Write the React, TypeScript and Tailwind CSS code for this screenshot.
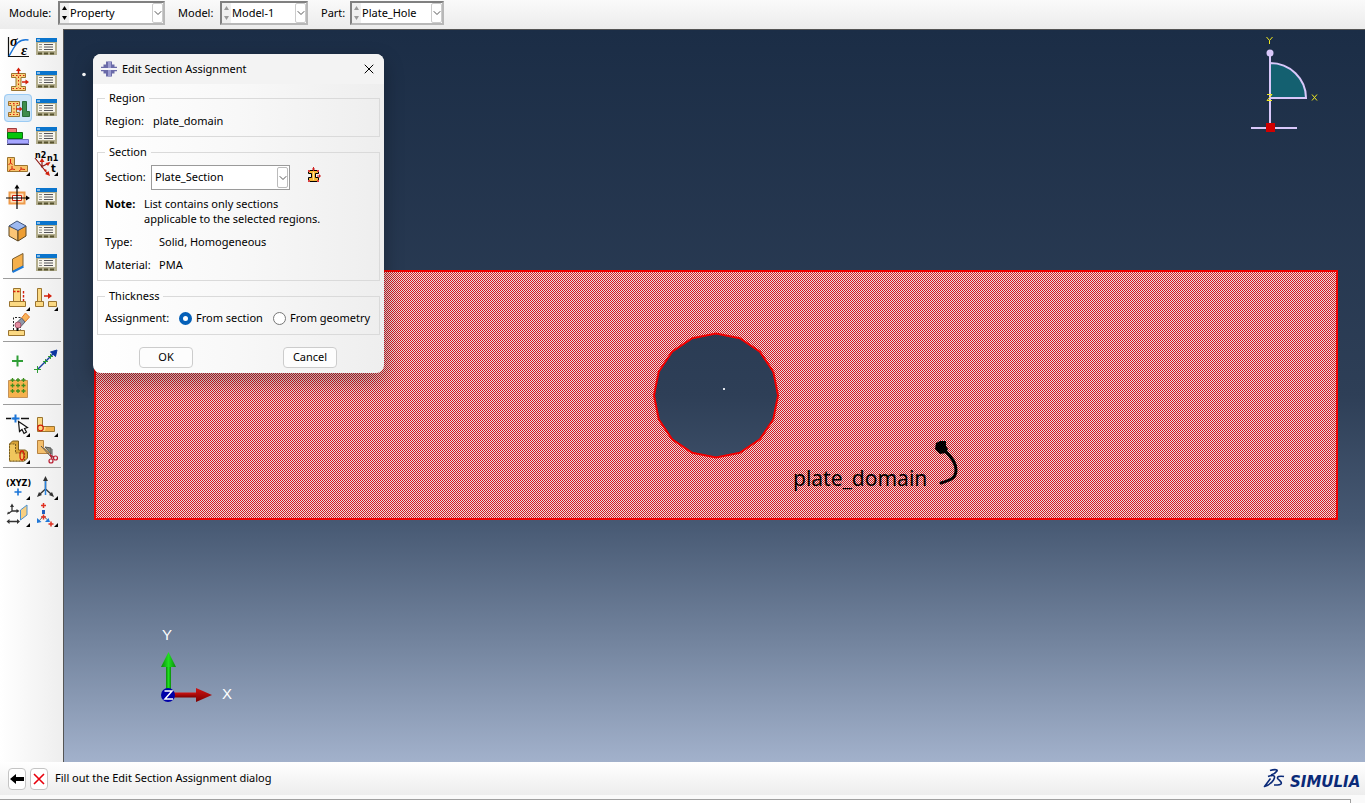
import type { ReactNode } from 'react';
import clsx from 'clsx';
import { ChevronDown, X } from 'lucide-react';

/* ---------- toolbox icons, all on a 28x28 grid ---------- */

const RED = '#d4200c';
const TAN = '#fbd983';
const BROWN = '#9a7430';

function Icon({ children }: { children: ReactNode }) {
  return (
    <svg viewBox="0 0 28 28" className="block w-7 h-7 overflow-visible" fill="none" aria-hidden="true">
      {children}
    </svg>
  );
}

const More = () => <path d="M26 22v4h-4z" fill="#000" />;

function Plus({ x, y, r, color, w = 1 }: { x: number; y: number; r: number; color: string; w?: number }) {
  return <path d={`M${x - r} ${y}H${x + r}M${x} ${y - r}V${y + r}`} stroke={color} strokeWidth={w} />;
}

function Beam({ x, y, w, h }: { x: number; y: number; w: number; h: number }) {
  const m = x + w / 2;
  return (
    <>
      <path
        d={`M${x} ${y}h${w}v4h${-(w / 2 - 2.5)}v${h - 8}h${w / 2 - 2.5}v4h${-w}v-4h${w / 2 - 2.5}v${-(h - 8)}h${-(w / 2 - 2.5)}z`}
        fill="#f9d27c"
        stroke={BROWN}
      />
      <path d={`M${x + 1} ${y + 2}h${w - 1}M${m} ${y + 3}v${h - 6}M${x + 1} ${y + h - 2}h${w - 1}`} stroke={RED} strokeDasharray="1.500 2" />
    </>
  );
}

const ManagerIcon = () => (
  <Icon>
    <rect x="4" y="5" width="21" height="17" fill="#b3ae8e" />
    <rect x="4" y="5" width="21" height="4" fill="#0a74cc" />
    <path d="M5 7h3" stroke="#fff" />
    <rect x="6" y="10" width="17" height="8" fill="#f7f5ec" />
    <path d="M7 11.500h3M7 14h3M7 16.500h3" stroke="#8c8c84" />
    <path d="M12 11.500h9M12 14h9M12 16.500h9" stroke="#55555a" />
    <path d="M6 20.500h4M12 20.500h4M18 20.500h4" stroke="#57532f" strokeWidth="2" />
  </Icon>
);

const MaterialIcon = () => (
  <Icon>
    <path d="M4.500 4V23.500H25" stroke="#111" strokeWidth="1.200" />
    <path d="M5 23C10 15 13 5 24.500 7" stroke="#1974d8" strokeWidth="1.400" />
    <text x="6" y="13" fontFamily="Liberation Serif, serif" fontStyle="italic" fontWeight="bold" fontSize="14" fill="#000">σ</text>
    <text x="17" y="22" fontFamily="Liberation Serif, serif" fontStyle="italic" fontWeight="bold" fontSize="15" fill="#000">ε</text>
  </Icon>
);

const SectionIcon = () => (
  <Icon>
    <Beam x={7.5} y={7.5} w={14} h={17} />
    <path d="M14.500 8V4M18 16h4" stroke={RED} strokeWidth="1.500" />
    <path d="M14.500 1.500l2.500 3.500h-5zM25 16l-3.500 2.500v-5z" fill={RED} />
  </Icon>
);

const AssignSectionIcon = () => (
  <Icon>
    <Beam x={4.5} y={7.5} w={11} h={15} />
    <path d="M12 15h4" stroke={RED} strokeWidth="1.500" />
    <path d="M18.500 15l-3 2.500v-5z" fill={RED} />
    <path d="M18.500 7.500h4v10h3v5h-7z" fill="#3f8c4c" stroke="#2b6b38" />
  </Icon>
);

const LayupIcon = () => (
  <Icon>
    <path d="M3.500 6.500h9v4h-9z" fill="#f07e78" stroke="#a03c3c" />
    <path d="M3.500 10.500h15v6h-15z" fill="#06c60c" stroke="#0a6e10" />
    <path d="M3.500 17.500h21v4h-21z" fill="#a6a6ff" stroke="#7474c4" />
    <path d="M3 22.500h22" stroke="#333350" />
  </Icon>
);

const OrientationIcon = () => (
  <Icon>
    <path d="M3.500 7.500h7v8h13v6h-20z" fill="#f8c269" stroke={BROWN} />
    <path d="M6.500 9v4l-2 2M6.500 13l2 1.500M8 16v3l-3 1.500M8 19l3 .5M17 17v2.500l-2 1.500M17 19l4 .5" stroke={RED} />
    <More />
  </Icon>
);

const NormalsIcon = () => (
  <Icon>
    <text x="3" y="8" fontFamily="DejaVu Sans, sans-serif" fontWeight="bold" fontSize="8" fill="#000">n2</text>
    <text x="15" y="11" fontFamily="DejaVu Sans, sans-serif" fontWeight="bold" fontSize="8" fill="#000">n1</text>
    <text x="19" y="22" fontFamily="DejaVu Sans, sans-serif" fontWeight="bold" fontSize="10" fill="#000">t</text>
    <path d="M3 8L15 23M10 16V11M9 17L17 13" stroke="#8d1a14" strokeWidth="1.200" />
    <path d="M10 8l2.500 4h-5zM18.500 12l-2.500 4-2.500-3zM18 26l-5-2 3.500-3zM12 19l3 1-2 2z" fill={RED} />
    <More />
  </Icon>
);

const ReferenceIcon = () => (
  <Icon>
    <path d="M5.500 9.500h15v11h-15z" fill="#fbe3c0" stroke="#ee9a4a" strokeWidth="2" />
    <path d="M8.500 12.500h9v5h-9z" fill="#fff" stroke={RED} />
    <path d="M13 4v22M2 15h21" stroke="#000" strokeWidth="1.200" />
    <path d="M13 1.500l2.500 4h-5zM26 15l-4 2.500v-5z" fill="#000" />
  </Icon>
);

const SolidIcon = () => (
  <Icon>
    <path d="M5 10l9 4v11l-9-5z" fill="#fcc575" stroke="#5c4620" />
    <path d="M14 14l8-4v10l-8 5z" fill="#ed9e34" stroke="#5c4620" />
    <path d="M5 10l8-5 9 5-8 4.500z" fill="#9db9f1" stroke="#3f5378" />
  </Icon>
);

const ShellIcon = () => (
  <Icon>
    <path d="M8.500 10L19 4.500V17L8.500 22.500z" fill="#f5b04c" stroke="#7a5e30" />
    <path d="M8.500 23L19.500 17.500" stroke="#1d7ad8" strokeWidth="2" />
  </Icon>
);

const StringerIcon = () => (
  <Icon>
    <path d="M9.500 3.500h7v13h-7zM5.500 16.500h16v5h-16z" fill={TAN} stroke={BROWN} />
    <path d="M9 6.500h8M19.500 6v10" stroke={RED} strokeWidth="1.400" strokeDasharray="2.500 1.500" />
    <More />
  </Icon>
);

const MoveStringerIcon = () => (
  <Icon>
    <path d="M5.500 3.500h4v13h-4zM3.500 16.500h8v5h-8zM16.500 16.500h8v5h-8z" fill={TAN} stroke={BROWN} />
    <path d="M12 11h5" stroke={RED} strokeWidth="1.500" />
    <path d="M20 11l-4 3V8z" fill={RED} />
    <More />
  </Icon>
);

const EraserIcon = () => (
  <Icon>
    <path d="M4.500 18.500h16v5h-16z" fill={TAN} stroke={BROWN} />
    <path d="M9.500 18V5.500h7V18" stroke="#222" strokeDasharray="2 1.500" />
    <path d="M17.500 6l4-5 4 4-4.500 5z" fill="#f9b35a" stroke="#e07828" />
    <path d="M12 11.500l5.500-5.500 3.500 4-5 5.500z" fill="#8f98a8" stroke="#5f6470" />
    <circle cx="14" cy="13" r="3" fill="#e38ca0" stroke="#a5566c" />
    <path d="M13.500 16v3" stroke="#111" strokeWidth="2" />
  </Icon>
);

const PointIcon = () => (
  <Icon>
    <Plus x={13.5} y={13} r={5.5} color="#2f9e36" w={2} />
  </Icon>
);

const WireIcon = () => (
  <Icon>
    <path d="M5.500 21.500L22 5" stroke="#173f9c" strokeWidth="1.400" />
    <path d="M25 2l-1.500 6.500-5-4.500z" fill="#0a36a0" stroke="#0a36a0" />
    <Plus x={5.5} y={21.5} r={3.5} color="#2f9e36" />
    <Plus x={13.5} y={13.5} r={2.5} color="#2f9e36" />
    <Plus x={18.5} y={8.5} r={2.5} color="#2f9e36" />
  </Icon>
);

const DatumGridIcon = () => (
  <Icon>
    <path d="M4.500 5.500h19v17h-19z" fill="#f6b24e" stroke="#c4935a" />
    {[5, 10.5, 16].map(y => [8.5, 14, 19.5].map(x => <Plus key={`${x}-${y}`} x={x} y={y} r={2} color="#3e8e1e" w={1.3} />))}
  </Icon>
);

const EdgePointIcon = () => (
  <Icon>
    <path d="M2 7.500h5M9 7.500h2M17 7.500h8" stroke="#111" strokeWidth="1.400" />
    <Plus x={11.5} y={7.5} r={4} color="#1974d8" w={2} />
    <path d="M14.500 10.500l1 10 2.500-2 2 4 2.500-1.500-2-3.500 3-1z" fill="#fff" stroke="#111" strokeWidth="1.200" />
    <More />
  </Icon>
);

const CornerIcon = () => (
  <Icon>
    <path d="M5.500 6.500h5v9h12v5h-17z" fill={TAN} stroke={BROWN} />
    <path d="M14 16h8v4h-9z" fill="#f3b04c" />
    <circle cx="8.500" cy="17" r="2.800" stroke={RED} strokeWidth="1.200" />
    <More />
  </Icon>
);

const PartitionIcon = () => (
  <Icon>
    <path d="M5.500 6l3-3h6v9h7l2 2v6l-3 3h-15z" fill="#d9a436" stroke="#7b5e1e" />
    <path d="M5.500 6h6v9h9v8h-15z" fill="#f0c65c" stroke="#7b5e1e" strokeDasharray="2 1" />
    <ellipse cx="18" cy="17.500" rx="2" ry="4.500" stroke={RED} strokeWidth="1.300" />
    <More />
  </Icon>
);

const CutIcon = () => (
  <Icon>
    <path d="M5.500 2.500h6v7l6 6h-12z" fill="#f4bf6c" stroke="#b78240" />
    <path d="M13 9l6 1v6z" fill="#8c8c7a" stroke="#555" />
    <path d="M9 8L20 20M20 11v9" stroke="#555" />
    <circle cx="19" cy="23" r="2" stroke="#b81c30" strokeWidth="1.200" />
    <circle cx="23.500" cy="20" r="2" stroke="#b81c30" strokeWidth="1.200" />
    <path d="M18 16l2 5M18 17l4 2" stroke="#b81c30" strokeWidth="1.200" />
  </Icon>
);

const XyzIcon = () => (
  <Icon>
    <text x="2" y="12" fontFamily="DejaVu Sans, sans-serif" fontWeight="bold" fontSize="8" fill="#000">(XYZ)</text>
    <Plus x={14} y={18} r={3.5} color="#1974d8" w={1.6} />
    <More />
  </Icon>
);

const AxesIcon = () => (
  <Icon>
    <path d="M13.500 16V5M13.500 15L8 20M13.500 15L19 20" stroke="#333" strokeWidth="1.400" />
    <path d="M13.500 2l2.500 5h-5zM5 23l2-5 3 3zM22 23l-5-2 3-3z" fill="#333" />
    <path d="M13.500 7v14" stroke="#2a84e0" strokeWidth="1.500" />
    <More />
  </Icon>
);

const PlaneIcon = () => (
  <Icon>
    <path d="M8 10V5M8 10h5M8 10l-3 2M5 20.500h9" stroke="#333" strokeWidth="1.300" />
    <path d="M8 2.500l2 3.500H6zM15.500 10l-3 2V8zM3 13.500l1-3 2 2zM2.500 20.500l3-2.500v5zM16 20.500l-3-2.500v5z" fill="#333" />
    <path d="M16.500 9L23 4v10l-6.500 5z" fill="#f8cf80" stroke="#4a90d0" />
    <More />
  </Icon>
);

const CsysIcon = () => (
  <Icon>
    <Plus x={11.5} y={4.5} r={2.5} color="#e03020" w={1.5} />
    <path d="M10 9h3v4h-3z" fill="#2060c0" />
    <path d="M11.500 15L7 20M11.500 15l5 5" stroke="#333" strokeDasharray="2 1" />
    <Plus x={11.5} y={16} r={2.5} color="#e03020" w={1.5} />
    <path d="M5 22v-5l4.500 4zM18 21h-5l3.500-4z" fill="#2078d8" />
    <Plus x={19} y={23} r={2.5} color="#e03020" w={1.5} />
    <More />
  </Icon>
);

/* ---------- toolbox ---------- */

type Tool = { label: string; icon: ReactNode; active?: boolean };

const manager = (name: string): Tool => ({ label: `${name} Manager`, icon: <ManagerIcon /> });

const primaryRows: { gap?: boolean; tools: Tool[] }[] = [
  { tools: [{ label: 'Create Material', icon: <MaterialIcon /> }, manager('Material')] },
  { gap: true, tools: [{ label: 'Create Section', icon: <SectionIcon /> }, manager('Section')] },
  { tools: [{ label: 'Assign Section', icon: <AssignSectionIcon />, active: true }, manager('Section Assignment')] },
  { tools: [{ label: 'Create Composite Layup', icon: <LayupIcon /> }, manager('Composite Layup')] },
  { tools: [{ label: 'Assign Material Orientation', icon: <OrientationIcon /> }, { label: 'Assign Beam Orientation', icon: <NormalsIcon /> }] },
  { gap: true, tools: [{ label: 'Create Reference', icon: <ReferenceIcon /> }, manager('Reference')] },
  { gap: true, tools: [{ label: 'Create Solid', icon: <SolidIcon /> }, manager('Solid')] },
  { gap: true, tools: [{ label: 'Create Skin', icon: <ShellIcon /> }, manager('Skin')] },
];

const toolGroups: Tool[][] = [
  [
    { label: 'Create Stringer', icon: <StringerIcon /> },
    { label: 'Move Stringer', icon: <MoveStringerIcon /> },
    { label: 'Remove Stringer', icon: <EraserIcon /> },
  ],
  [
    { label: 'Create Point', icon: <PointIcon /> },
    { label: 'Create Wire', icon: <WireIcon /> },
    { label: 'Create Grid', icon: <DatumGridIcon /> },
  ],
  [
    { label: 'Partition Edge', icon: <EdgePointIcon /> },
    { label: 'Partition Face', icon: <CornerIcon /> },
    { label: 'Partition Cell', icon: <PartitionIcon /> },
    { label: 'Repair', icon: <CutIcon /> },
  ],
  [
    { label: 'Datum Point', icon: <XyzIcon /> },
    { label: 'Datum Axis', icon: <AxesIcon /> },
    { label: 'Datum Plane', icon: <PlaneIcon /> },
    { label: 'Datum CSYS', icon: <CsysIcon /> },
  ],
];

function ToolButton({ tool, className }: { tool: Tool; className: string }) {
  return (
    <button
      type="button"
      aria-label={tool.label}
      className={clsx('w-7', className, tool.active && 'rounded-sm bg-[#cfe5f8] outline -outline-offset-1 outline-[#9ccbf3]')}
    >
      {tool.icon}
    </button>
  );
}

function Toolbox() {
  return (
    <aside className="w-[63px] flex-shrink-0 bg-gradient-to-r from-white to-[#eeeeee]">
      <div className="pl-1 pt-1 pb-px">
        {primaryRows.map((row, i) => (
          <div key={i} className={clsx('flex', row.gap && 'mt-[5px]')}>
            {row.tools.map(tool => (
              <ToolButton key={tool.label} tool={tool} className="h-7" />
            ))}
          </div>
        ))}
      </div>
      {toolGroups.map((group, i) => (
        <div key={i} className="ml-[3px] mr-[2px] flex flex-wrap border-t border-[#9c9c9c] pt-[6px] pb-[2px] pl-px">
          {group.map(tool => (
            <ToolButton key={tool.label} tool={tool} className="h-[27px]" />
          ))}
        </div>
      ))}
    </aside>
  );
}

/* ---------- context bar ---------- */

type ContextSelectProps = { id: string; label: string; value: string; labelWidth: string; width: string; enabled?: boolean };

function ContextSelect({ id, label, value, labelWidth, width, enabled }: ContextSelectProps) {
  const arrow = enabled ? '#000' : '#9a9a9a';
  return (
    <div className="flex items-center">
      <label htmlFor={id} className={labelWidth}>{label}</label>
      <div className={clsx('relative flex h-6 items-center border-2 border-[#808080] border-b-[#b8b8b8] border-r-[#b8b8b8] bg-white', width)}>
        <div className="flex h-full w-[9px] flex-col bg-[#f0f0f0]">
          <button type="button" aria-label={`Previous ${id}`} disabled={!enabled} className="flex flex-1 items-center justify-center">
            <svg width="5" height="4"><path d="M2.500 0L5 4H0z" fill={arrow} /></svg>
          </button>
          <button type="button" aria-label={`Next ${id}`} disabled={!enabled} className="flex flex-1 items-center justify-center">
            <svg width="5" height="4"><path d="M2.500 4L5 0H0z" fill={arrow} /></svg>
          </button>
        </div>
        <select id={id} defaultValue={value} className="h-full min-w-0 flex-1 appearance-none bg-transparent pl-px outline-none">
          <option>{value}</option>
        </select>
        <span className="pointer-events-none absolute inset-y-0 right-0 flex w-[11px] items-center justify-center rounded-xs border border-[#cccccc] bg-white">
          <ChevronDown className="h-3 w-3 flex-shrink-0 text-[#555555]" />
        </span>
      </div>
    </div>
  );
}

/* ---------- viewport ---------- */

const HOLE = { x: 653, y: 366.5, r: 62 };
const holePoints = Array.from({ length: 16 }, (_, i) => {
  const a = (i * Math.PI) / 8;
  return `${HOLE.x + HOLE.r * Math.cos(a)} ${HOLE.y + HOLE.r * Math.sin(a)}`;
});
const platePath = `M32 242H1274V490H32ZM${holePoints.join('L')}Z`;

function Scene() {
  return (
    <svg className="absolute inset-0 h-full w-full" aria-label="Plate_Hole model">
      <defs>
        <pattern id="stipple" width="2" height="2" patternUnits="userSpaceOnUse">
          <g shapeRendering="crispEdges">
            <rect width="2" height="2" fill="#e4e0e0" />
            <rect width="1" height="1" fill="#dc141c" />
            <rect x="1" y="1" width="1" height="1" fill="#dc141c" />
          </g>
        </pattern>
        <linearGradient id="shaftY"><stop stopColor="#0a8a0a" /><stop offset=".5" stopColor="#1fe01f" /><stop offset="1" stopColor="#0a8a0a" /></linearGradient>
        <linearGradient id="shaftX" x2="0" y2="1"><stop stopColor="#d01414" /><stop offset="1" stopColor="#7c0000" /></linearGradient>
      </defs>
      <path d={platePath} fill="url(#stipple)" fillRule="evenodd" stroke="#f00000" strokeWidth="2" />
      <circle cx="21" cy="45.500" r="1.800" fill="#fff" />
      <rect x="660" y="359" width="2" height="2" fill="#dfe4ea" />

      <text x="730" y="457" fontFamily="Noto Sans, sans-serif" fontSize="21" fill="#000">plate_domain</text>
      <path d="M881 421C889 428 893 434 893 441C893 449 888 451 878 454" stroke="#000" strokeWidth="3" fill="none" strokeLinecap="round" />
      <path d="M873 414l4-2h6v5l2 3-2 4-6 1-5-5z" fill="#000" />

      <path d="M103 637h5v26h-5z" fill="url(#shaftY)" />
      <path d="M105.500 623l7.500 15H98z" fill="url(#shaftY)" />
      <path d="M110 663.500h24v5h-24z" fill="url(#shaftX)" />
      <path d="M133 659l16 7-16 7z" fill="url(#shaftX)" />
      <circle cx="105" cy="666" r="7" fill="#0000a8" />
      <path d="M101.500 662h7.500l-7 8h8" stroke="#fff" strokeWidth="1.500" fill="none" />
      <text x="99" y="611" fontFamily="Liberation Sans, sans-serif" fontSize="15" fill="#fff">Y</text>
      <text x="159" y="670" fontFamily="Liberation Sans, sans-serif" fontSize="15" fill="#fff">X</text>
    </svg>
  );
}

function ViewCompass() {
  return (
    <svg className="absolute top-0 right-[45px] h-[105px] w-20" viewBox="0 0 80 105" aria-label="View compass">
      <path d="M30 34A36 35 0 0 1 66 69H30z" fill="#146070" stroke="#d9c8fa" strokeWidth="2" />
      <path d="M30 24V99M11 99H57" stroke="#d9c8fa" strokeWidth="2" />
      <circle cx="30" cy="24" r="3.500" fill="#d9c8fa" />
      <rect x="26" y="94" width="9" height="9" fill="#d00000" />
      <g stroke="#f0e820" fill="none">
        <path d="M26.500 8l3 3.500 3-3.500M29.500 11.500V15" />
        <path d="M27 65.500h5l-5 6h5" />
        <path d="M72 65.500l5 6M77 65.500l-5 6" />
      </g>
    </svg>
  );
}

/* ---------- dialog ---------- */

function Group({ title, className, children }: { title: string; className: string; children: ReactNode }) {
  return (
    <fieldset className={clsx('border border-[#dadada] px-[7px]', className)}>
      <legend className="px-1 leading-4">{title}</legend>
      {children}
    </fieldset>
  );
}

const radioClass = 'h-[13px] w-[13px] appearance-none rounded-full border border-[#777777] bg-white checked:border-4 checked:border-[#0560b8]';

function SectionDialog() {
  return (
    <form
      role="dialog"
      aria-labelledby="dialog-title"
      onSubmit={e => e.preventDefault()}
      className="absolute top-[25px] left-[30px] w-[291px] overflow-hidden rounded-lg bg-gradient-to-r from-white via-[#f8f8f8] to-[#eeeeee] pb-[5px] shadow-[0_8px_20px_rgba(0,0,0,0.3)]"
    >
      <header className="flex h-[30px] items-center bg-[#f3f3f3] pr-[7px] pl-2">
        <svg viewBox="0 0 16 16" className="h-4 w-4" aria-hidden="true">
          <path d="M5 0.500h6v3h2.500v2.200H16v1.500H0V5.700h2.500V3.500H5z" fill="#6a6aa8" />
          <path d="M5 15.500h6v-3h2.500v-2.200H16V8.800H0v1.500h2.500v2.200H5z" fill="#6a6aa8" />
          <path d="M7 0.500h3v6.700H7zM7 8.800h3v6.700H7z" fill="#9c9cd0" />
          <path d="M0 8h16" stroke="#fff" strokeWidth="1.600" />
        </svg>
        <h1 id="dialog-title" className="flex-1 pl-[5px]">Edit Section Assignment</h1>
        <button type="button" aria-label="Close">
          <X className="h-4 w-4" strokeWidth={1.5} />
        </button>
      </header>

      <div className="px-1 pt-[6px]">
        <Group title="Region" className="h-[47px]">
          <p className="flex pt-[7px] leading-4">
            <span className="w-12">Region:</span>
            <span>plate_domain</span>
          </p>
        </Group>

        <Group title="Section" className="mt-[7px] h-[137px]">
          <div className="flex items-center pt-[5px]">
            <label htmlFor="section" className="w-[46px]">Section:</label>
            <div className="relative h-[25px] w-[139px]">
              <select id="section" defaultValue="Plate_Section" className="h-full w-full appearance-none border border-[#9a9a9a] bg-white pl-[3px] outline-none">
                <option>Plate_Section</option>
              </select>
              <span className="pointer-events-none absolute inset-y-[2px] right-[2px] flex w-[11px] items-center justify-center rounded-xs border border-[#bbbbbb]">
                <ChevronDown className="h-3 w-3 flex-shrink-0 text-[#555555]" />
              </span>
            </div>
            <button type="button" aria-label="Create section" className="ml-4 pb-[6px]">
              <svg viewBox="0 0 16 16" className="h-4 w-4">
                <path d="M2.500 3.500h10v3h-3v4h3v4h-10v-4h3v-4h-3z" fill="#f5b838" stroke="#000" />
                <path d="M7.500 5v8" stroke="#fbe29a" />
                <path d="M7.500 0v4M6 2h3M11 9h4M13.500 7.500v3" stroke="#d02020" />
                <path d="M2 3h2v2H2zM11 3h2v2h-2zM2 13h2v2H2zM11 13h2v2h-2z" fill="#d84040" />
              </svg>
            </button>
          </div>
          <div className="flex pt-[6px] leading-[15px]">
            <strong className="w-[39px]">Note:</strong>
            <p>List contains only sections<br />applicable to the selected regions.</p>
          </div>
          <dl className="grid grid-cols-[54px_1fr] gap-y-2 pt-2 leading-[15px]">
            <dt>Type:</dt>
            <dd>Solid, Homogeneous</dd>
            <dt>Material:</dt>
            <dd>PMA</dd>
          </dl>
        </Group>

        <Group title="Thickness" className="mt-[7px] h-[47px]">
          <div className="flex items-center whitespace-nowrap pt-[6px] leading-4">
            <span className="w-[74px]">Assignment:</span>
            <label className="flex w-[94px] items-center gap-1">
              <input type="radio" name="assignment" defaultChecked className={radioClass} />
              From section
            </label>
            <label className="flex items-center gap-1">
              <input type="radio" name="assignment" className={radioClass} />
              From geometry
            </label>
          </div>
        </Group>
      </div>

      <footer className="flex justify-between pt-3 pr-[47px] pl-[46px]">
        <button type="submit" className="h-[21px] w-[54px] rounded-sm border border-[#cccccc] bg-[#fdfdfd]">OK</button>
        <button type="button" className="h-[21px] w-[54px] rounded-sm border border-[#cccccc] bg-[#fdfdfd]">Cancel</button>
      </footer>
    </form>
  );
}

/* ---------- prompt area ---------- */

function Prompt() {
  return (
    <footer className="flex h-[41px] flex-shrink-0 flex-col bg-[#fafafa]">
      <div className="flex h-[33px] items-center bg-gradient-to-b from-white to-[#ededed] pl-2">
        <button type="button" aria-label="Back" className="flex h-[22px] w-[18px] items-center justify-center rounded-sm border border-[#c4c4c4] bg-white">
          <svg width="14" height="12"><path d="M0 6l6-5v3h8v4H6v3z" fill="#000" /></svg>
        </button>
        <button type="button" aria-label="Cancel procedure" className="ml-1 flex h-[22px] w-[18px] items-center justify-center rounded-sm border border-[#c4c4c4] bg-white">
          <svg width="12" height="12"><path d="M1 1l10 10M11 1L1 11" stroke="#e8000c" strokeWidth="1.600" /></svg>
        </button>
        <span className="flex-1 pl-[7px]">Fill out the Edit Section Assignment dialog</span>
        <svg width="102" height="26" viewBox="0 0 102 26" aria-label="SIMULIA">
          <g fill="none" stroke="#0a2a78" strokeWidth="1.600" strokeLinejoin="round">
            <path d="M7 4.500c3-1 8-1.500 7 .5c-1 1.500-3 3-6 4" />
            <path d="M5 10.500c6-2 8-1 5.500 3.500c-2 3-5 5.500-9 6.500l6-8" />
            <path d="M21 10.500c-4-.8-8 0-6 2.500c2 2 4.500 3 3 5c-1 1.200-4 1-7 1" />
          </g>
          <text x="27" y="21" fontFamily="DejaVu Sans, sans-serif" fontStyle="italic" fontWeight="bold" fontSize="15" fill="#0a2a78">SIMULIA</text>
        </svg>
      </div>
      <div className="mt-1 mr-[14px] flex-1 border-t border-r border-[#a0a0a0] bg-white" />
    </footer>
  );
}

export default function App() {
  return (
    <div className="flex h-screen flex-col overflow-hidden bg-[#f0f0f0] font-['Noto_Sans','Open_Sans',sans-serif] text-[11px] text-black">
      <header className="flex h-[29px] flex-shrink-0 items-start gap-[13px] bg-gradient-to-b from-[#fafafa] to-[#ececec] pt-px pl-[9px]">
        <ContextSelect id="module" label="Module:" value="Property" labelWidth="w-[49px]" width="w-[107px]" enabled />
        <ContextSelect id="model" label="Model:" value="Model-1" labelWidth="w-[42px]" width="w-[88px]" />
        <ContextSelect id="part" label="Part:" value="Plate_Hole" labelWidth="w-[29px]" width="w-[94px]" />
      </header>
      <div className="flex min-h-0 flex-1">
        <Toolbox />
        <main className="relative min-w-0 flex-1 overflow-hidden bg-[linear-gradient(#1b2d46_0%,#2e3f57_50%,#465872_67%,#74859f_84%,#a2b1cb_100%)] shadow-[inset_1px_1px_0_#555]">
          <Scene />
          <ViewCompass />
          <SectionDialog />
        </main>
      </div>
      <Prompt />
    </div>
  );
}
